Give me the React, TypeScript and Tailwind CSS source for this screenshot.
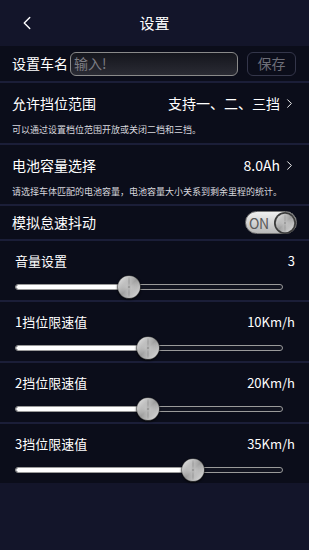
import { ChevronLeft, ChevronRight } from "lucide-react";

interface SliderRow {
  label: string;
  value: string;
  pct: number;
}

// 滑块设置项
const sliders: SliderRow[] = [
  { label: "音量设置", value: "3", pct: 42.5 },
  { label: "1挡位限速值", value: "10Km/h", pct: 49.6 },
  { label: "2挡位限速值", value: "20Km/h", pct: 49.6 },
  { label: "3挡位限速值", value: "35Km/h", pct: 66.4 },
];

function Divider() {
  return <div className="h-[2px] bg-[#1b1e38]" />;
}

function Knob({ size }: { size: number }) {
  return (
    <svg width={size} height={size} viewBox="0 0 24 24">
      <defs>
        <linearGradient id="kb" x1="0" y1="0" x2="1" y2="1">
          <stop offset="0" stopColor="#f2f2f2" />
          <stop offset="0.5" stopColor="#9a9a9a" />
          <stop offset="1" stopColor="#e8e8e8" />
        </linearGradient>
        <radialGradient id="kc" cx="0.5" cy="0.5" r="0.5">
          <stop offset="0" stopColor="#8a8a8a" />
          <stop offset="0.15" stopColor="#d8d8d8" />
          <stop offset="1" stopColor="#bdbdbd" stopOpacity="0" />
        </radialGradient>
      </defs>
      <circle cx="12" cy="12" r="11.5" fill="#555" />
      <circle cx="12" cy="12" r="11" fill="url(#kb)" />
      <path d="M12 1 L10.5 12 L12 23 L13.5 12 Z" fill="#6e6e6e" opacity="0.55" />
      <circle cx="12" cy="12" r="11" fill="url(#kc)" opacity="0.6" />
    </svg>
  );
}

function Slider({ pct }: { pct: number }) {
  return (
    <div className="relative h-[24px] mx-[15px] mr-[26px] flex items-center">
      <div className="w-full h-[6px] rounded-full border border-[#9a9a9a] bg-[#121420] overflow-hidden">
        <div className="h-full bg-white rounded-full" style={{ width: `${pct}%` }} />
      </div>
      <div
        className="absolute top-0 -translate-x-1/2 drop-shadow-[0_1px_1px_rgba(0,0,0,0.8)]"
        style={{ left: `${pct}%` }}
      >
        <Knob size={24} />
      </div>
    </div>
  );
}

function Toggle() {
  return (
    <div className="w-[52px] h-[23px] rounded-full bg-gradient-to-b from-[#f0f0f0] to-[#b9b9b9] border border-[#777] flex items-center justify-between pl-[3px] pr-0">
      <span className="text-[14px] leading-none text-[#5a5a5a] tracking-tight">ON</span>
      <div className="rounded-full bg-[#3a3a3a] p-[1px]">
        <Knob size={20} />
      </div>
    </div>
  );
}

export default function App() {
  return (
    <div
      className="w-[309px] h-[550px] bg-[#13152a] text-white flex flex-col overflow-hidden"
      style={{ fontFamily: '"Noto Sans CJK SC", "Noto Sans", sans-serif' }}
    >
      {/* 顶栏 */}
      <header className="h-[46px] flex items-center relative">
        <ChevronLeft size={22} strokeWidth={1.5} className="absolute left-[16px] text-white" />
        <span className="flex-1 text-center text-[15px]">设置</span>
      </header>

      {/* 车名 */}
      <div className="h-[35px] bg-[#0b0d1a] flex items-center pl-[12px] pr-[13px] gap-[2px]">
        <span className="text-[14px] whitespace-nowrap">设置车名</span>
        <div className="w-[168px] h-[24px] rounded-[6px] border border-[#8a8a8a] bg-gradient-to-b from-[#15161d] to-[#2a2b34] flex items-center px-[3px]">
          <span className="text-[14px] text-[#7d7d84]">输入!</span>
        </div>
        <div className="ml-auto w-[49px] h-[24px] rounded-[6px] border border-[#34364a] flex items-center justify-center">
          <span className="text-[14px] text-[#6d6e78]">保存</span>
        </div>
      </div>
      <Divider />

      {/* 挡位范围 */}
      <div className="h-[60px] bg-[#0b0d1a] flex flex-col pl-[12px] pr-[12px] pt-[10px]">
        <div className="flex items-center justify-between">
          <span className="text-[14px]">允许挡位范围</span>
          <span className="text-[14px] flex items-center gap-[2px]">
            支持一、二、三挡
            <ChevronRight size={15} strokeWidth={1.5} />
          </span>
        </div>
        <span className="text-[9px] text-[#d8d8de] mt-[9px]">可以通过设置档位范围开放或关闭二档和三挡。</span>
      </div>
      <Divider />

      {/* 电池容量 */}
      <div className="h-[59px] bg-[#0b0d1a] flex flex-col pl-[12px] pr-[12px] pt-[10px]">
        <div className="flex items-center justify-between">
          <span className="text-[14px]">电池容量选择</span>
          <span className="text-[14px] flex items-center gap-[2px]">
            8.0Ah
            <ChevronRight size={15} strokeWidth={1.5} />
          </span>
        </div>
        <span className="text-[9px] text-[#d8d8de] mt-[9px] whitespace-nowrap">
          请选择车体匹配的电池容量，电池容量大小关系到剩余里程的统计。
        </span>
      </div>
      <Divider />

      {/* 怠速抖动 */}
      <div className="h-[33px] bg-[#0b0d1a] flex items-center justify-between pl-[12px] pr-[12px]">
        <span className="text-[14px]">模拟怠速抖动</span>
        <Toggle />
      </div>

      {sliders.map((s) => (
        <div key={s.label}>
          <Divider />
          <div className="h-[59px] bg-[#0b0d1a] flex flex-col pt-[10px]">
            <div className="flex items-center justify-between pl-[15px] pr-[14px]">
              <span className="text-[13px]">{s.label}</span>
              <span className="text-[13px]">{s.value}</span>
            </div>
            <div className="mt-[4px]">
              <Slider pct={s.pct} />
            </div>
          </div>
        </div>
      ))}
    </div>
  );
}
